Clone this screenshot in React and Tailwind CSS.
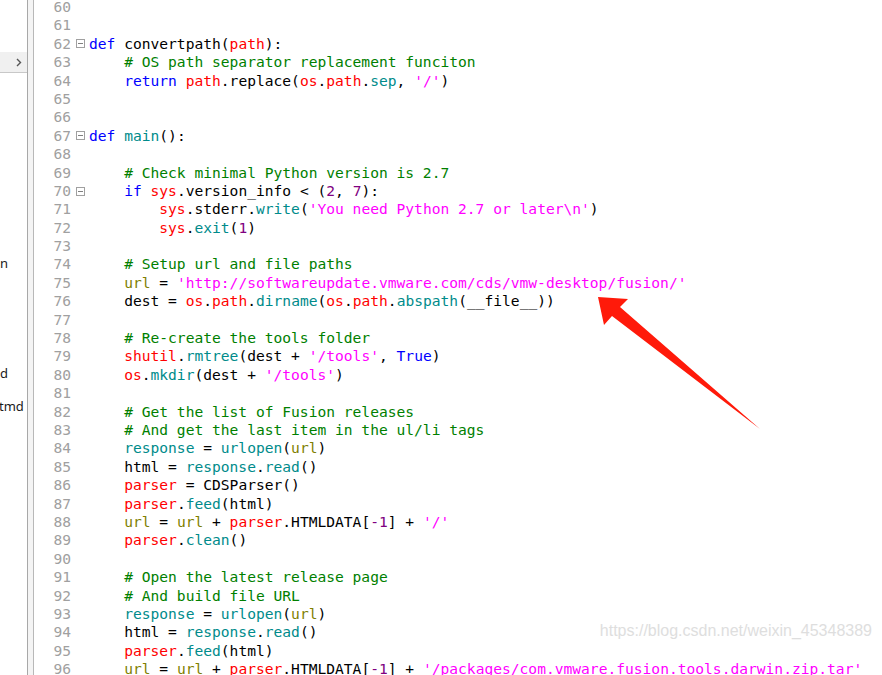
const K = 'text-[#0000ff]'
const C = 'text-[#008000]'
const R = 'text-[#ff0000]'
const T = 'text-[#008b8b]'
const S = 'text-[#ff00ff]'
const O = 'text-[#808000]'
const N = 'text-[#800080]'
const D = 'text-black'

const lines = [
  { n: 60, t: [] },
  { n: 61, t: [] },
  { n: 62, fold: true, t: [['def', K], [' convertpath(', D], ['path', R], ['):', D]] },
  { n: 63, t: [['    # OS path separator replacement funciton', C]] },
  { n: 64, t: [['    return', K], [' ', D], ['path', R], ['.replace(', D], ['os', R], ['.', D], ['path', R], ['.', D], ['sep', T], [', ', D], ["'/'", S], [')', D]] },
  { n: 65, t: [] },
  { n: 66, t: [] },
  { n: 67, fold: true, t: [['def', K], [' ', D], ['main', T], ['():', D]] },
  { n: 68, t: [] },
  { n: 69, t: [['    # Check minimal Python version is 2.7', C]] },
  { n: 70, fold: true, t: [['    if', K], [' ', D], ['sys', R], ['.version_info < (', D], ['2', N], [', ', D], ['7', N], ['):', D]] },
  { n: 71, t: [['        sys', R], ['.stderr.', D], ['write', T], ['(', D], ["'You need Python 2.7 or later\\n'", S], [')', D]] },
  { n: 72, t: [['        sys', R], ['.', D], ['exit', T], ['(', D], ['1', N], [')', D]] },
  { n: 73, t: [] },
  { n: 74, t: [['    # Setup url and file paths', C]] },
  { n: 75, t: [['    url', O], [' = ', D], ["'http://softwareupdate.vmware.com/cds/vmw-desktop/fusion/'", S]] },
  { n: 76, t: [['    dest = ', D], ['os', R], ['.', D], ['path', R], ['.', D], ['dirname', T], ['(', D], ['os', R], ['.', D], ['path', R], ['.', D], ['abspath', T], ['(__file__))', D]] },
  { n: 77, t: [] },
  { n: 78, t: [['    # Re-create the tools folder', C]] },
  { n: 79, t: [['    shutil', R], ['.', D], ['rmtree', T], ['(dest + ', D], ["'/tools'", S], [', ', D], ['True', K], [')', D]] },
  { n: 80, t: [['    os', R], ['.', D], ['mkdir', T], ['(dest + ', D], ["'/tools'", S], [')', D]] },
  { n: 81, t: [] },
  { n: 82, t: [['    # Get the list of Fusion releases', C]] },
  { n: 83, t: [['    # And get the last item in the ul/li tags', C]] },
  { n: 84, t: [['    response', T], [' = ', D], ['urlopen', T], ['(', D], ['url', O], [')', D]] },
  { n: 85, t: [['    html = ', D], ['response', T], ['.', D], ['read', T], ['()', D]] },
  { n: 86, t: [['    parser', R], [' = CDSParser()', D]] },
  { n: 87, t: [['    parser', R], ['.', D], ['feed', T], ['(html)', D]] },
  { n: 88, t: [['    url', O], [' = ', D], ['url', O], [' + ', D], ['parser', R], ['.HTMLDATA[', D], ['-1', N], ['] + ', D], ["'/'", S]] },
  { n: 89, t: [['    parser', R], ['.', D], ['clean', T], ['()', D]] },
  { n: 90, t: [] },
  { n: 91, t: [['    # Open the latest release page', C]] },
  { n: 92, t: [['    # And build file URL', C]] },
  { n: 93, t: [['    response', T], [' = ', D], ['urlopen', T], ['(', D], ['url', O], [')', D]] },
  { n: 94, t: [['    html = ', D], ['response', T], ['.', D], ['read', T], ['()', D]] },
  { n: 95, t: [['    parser', R], ['.', D], ['feed', T], ['(html)', D]] },
  { n: 96, t: [['    url', O], [' = ', D], ['url', O], [' + ', D], ['parser', R], ['.HTMLDATA[', D], ['-1', N], ['] + ', D], ["'/packages/com.vmware.fusion.tools.darwin.zip.tar'", S]] },
]

function FoldBox() {
  return (
    <span className="w-[9px] h-[9px] border border-[#a0a0a0] flex items-center justify-center">
      <span className="w-[5px] h-px bg-[#808080]" />
    </span>
  )
}

export default function App() {
  return (
    <div className="relative w-[882px] h-[675px] overflow-hidden bg-white flex">
      {/* side panel (file list, scrolled) */}
      <div className="w-[28px] shrink-0 flex flex-col text-[13px] text-[#1a1a1a] font-['Noto_Sans',sans-serif] border-r border-[#a8a8a8]">
        <div className="h-[52px]" />
        <div className="h-[20px] bg-[#f0f0f0] flex items-center justify-end pr-[5px]">
          <svg width="6" height="9" viewBox="0 0 6 9">
            <path d="M1 1 L4.5 4.5 L1 8" fill="none" stroke="#555" strokeWidth="1.4" />
          </svg>
        </div>
        <div className="h-px bg-[#c8c8c8]" />
        <div className="h-[181px]" />
        <div className="leading-[18px]">n</div>
        <div className="h-[92px]" />
        <div className="leading-[18px]">d</div>
        <div className="h-[15px]" />
        <div className="leading-[18px] -ml-[1px]">tmd</div>
      </div>

      {/* splitter */}
      <div className="w-[6px] shrink-0 bg-[#f4f4f4] border-r border-[#b8b8b8]" />

      {/* editor */}
      <div className="flex-1 mt-[-2px] font-['DejaVu_Sans_Mono',monospace] text-[14.6px] leading-[18.4px]">
        {lines.map((l) => (
          <div key={l.n} className="flex h-[18.4px] items-center">
            <span className="w-[37px] shrink-0 text-right text-[#a0a0a0]">{l.n}</span>
            <span className="w-[18px] shrink-0 flex justify-center">{l.fold && <FoldBox />}</span>
            <span className="whitespace-pre">
              {l.t.map((tok, i) => (
                <span key={i} className={tok[1]}>{tok[0]}</span>
              ))}
            </span>
          </div>
        ))}
      </div>

      {/* annotation arrow */}
      <svg className="absolute left-0 top-0 pointer-events-none" width="882" height="675">
        <polygon points="598,297 628,299 620,307 760,429 612,316 604,325" fill="#ff1a0a" />
      </svg>

      {/* watermark */}
      <div className="absolute right-[10px] top-[619px] text-[16px] text-[#dedede] font-['Liberation_Sans',sans-serif] [text-shadow:0_0_1px_#ffffff]">
        https://blog.csdn.net/weixin_45348389
      </div>
    </div>
  )
}
